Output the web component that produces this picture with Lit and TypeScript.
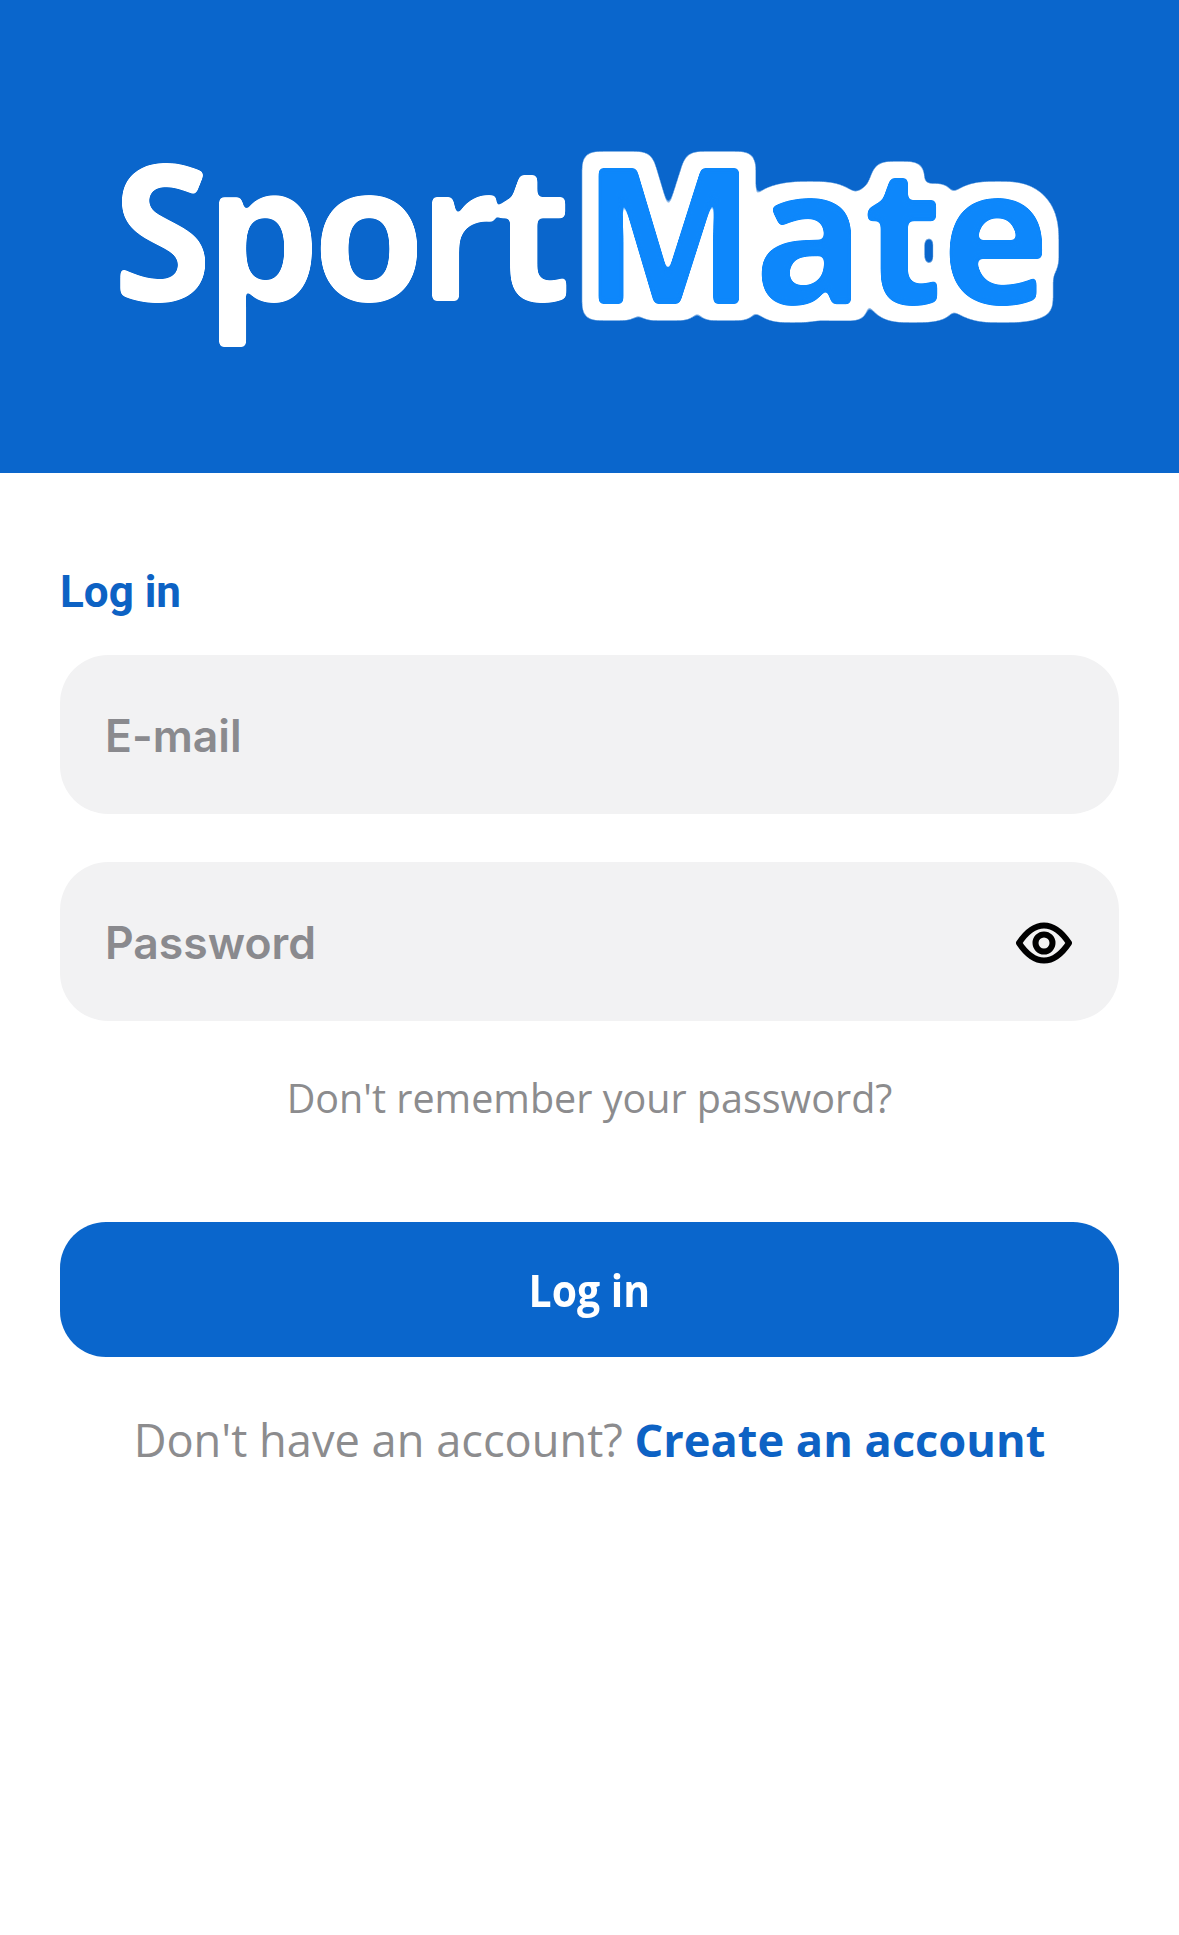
import { LitElement, html, css } from "lit";
import { customElement } from "lit/decorators.js";

@customElement("app-root")
export class AppRoot extends LitElement {
  static styles = css`
    :host { display: block; width: 1179px; height: 1935px; background: #fff; overflow: hidden; font-family: "Open Sans", sans-serif; }
    .defs { position: absolute; width: 0; height: 0; }
    .hero { height: 473px; background: #0a66cc; display: flex; align-items: center; justify-content: center; box-sizing: border-box; padding: 0 5px 18px 0; }
    .logo { font-family: "Open Sans", sans-serif; font-weight: 700; font-size: 190px; line-height: 1; color: #fff; white-space: nowrap; display: flex; }
    .sport { letter-spacing: -8px; transform: scaleX(.96); transform-origin: left center; filter: url(#round); margin-right: -16px; }
    .mate { color: #0d87fb; letter-spacing: -2px; margin-left: 15px; transform: translateY(3px) scaleX(.97); transform-origin: left center; filter: url(#outline); }
    .body { padding: 0 60px; display: flex; flex-direction: column; }
    h1 { margin: 96px 0 0; font: 700 44px/46px Roboto, sans-serif; color: #0d62c4; }
    .field { height: 159px; border-radius: 48px; background: #f2f2f3; display: flex; align-items: center; justify-content: space-between; padding: 2px 46px 0 45px; box-sizing: border-box; font: 600 44.5px Inter, sans-serif; color: #8a8a8e; }
    .email { margin-top: 40px; }
    .pass { margin-top: 48px; }
    .eye { width: 60px; height: 60px; margin-right: -1px; flex: none; }
    .forgot { margin-top: 49px; text-align: center; font-size: 39.5px; line-height: 56px; color: #8c8c8e; }
    .btn { margin-top: 96px; height: 135px; border-radius: 46px; background: #0a66cc; color: #fff; display: flex; align-items: center; justify-content: center; font: 700 44px "Open Sans", sans-serif; }
    .btn span { transform: scaleX(.93); }
    .signup { margin-top: 52px; text-align: center; font-size: 45.2px; line-height: 62px; color: #8c8c8e; white-space: nowrap; }
    .signup b { color: #0d62c4; font-weight: 700; }
  `;
  render() {
    return html`
      <svg class="defs" aria-hidden="true">
        <defs>
          <filter id="round" x="-5%" y="-5%" width="110%" height="110%" color-interpolation-filters="sRGB">
            <feGaussianBlur stdDeviation="3"/>
            <feComponentTransfer><feFuncA type="linear" slope="10" intercept="-4.5"/></feComponentTransfer>
          </filter>
          <filter id="outline" x="-10%" y="-20%" width="120%" height="140%" color-interpolation-filters="sRGB">
            <feGaussianBlur in="SourceGraphic" stdDeviation="3" result="b"/>
            <feComponentTransfer in="b" result="fill"><feFuncA type="linear" slope="10" intercept="-4.5"/></feComponentTransfer>
            <feMorphology in="SourceAlpha" operator="dilate" radius="10" result="d"/>
            <feGaussianBlur in="d" stdDeviation="6" result="db"/>
            <feComponentTransfer in="db" result="da"><feFuncA type="linear" slope="20" intercept="-2"/></feComponentTransfer>
            <feFlood flood-color="#fff"/>
            <feComposite in2="da" operator="in" result="ring"/>
            <feMerge><feMergeNode in="ring"/><feMergeNode in="fill"/></feMerge>
          </filter>
        </defs>
      </svg>
      <div class="hero"><div class="logo"><span class="sport">Sport</span><span class="mate">Mate</span></div></div>
      <div class="body">
        <h1>Log in</h1>
        <div class="field email">E-mail</div>
        <div class="field pass">Password
          <svg class="eye" viewBox="0 0 60 60" fill="none" stroke="#000" stroke-width="6">
            <path d="M5 30C11 21 19 12.500 30 12.500S49 21 55 30C49 39 41 47.500 30 47.500S11 39 5 30Z" stroke-linejoin="round"/>
            <circle cx="30" cy="30" r="8.500"/>
          </svg>
        </div>
        <div class="forgot">Don't remember your password?</div>
        <div class="btn"><span>Log in</span></div>
        <div class="signup">Don't have an account? <b>Create an account</b></div>
      </div>
    `;
  }
}
